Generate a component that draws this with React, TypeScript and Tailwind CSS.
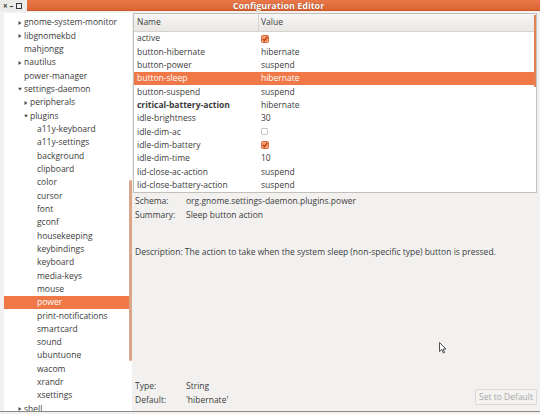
import React from 'react'

type Node = { label: string; depth: number; arrow?: 'right' | 'down'; selected?: boolean }

const tree: Node[] = [
  { label: 'gnome-system-monitor', depth: 0, arrow: 'right' },
  { label: 'libgnomekbd', depth: 0, arrow: 'right' },
  { label: 'mahjongg', depth: 0 },
  { label: 'nautilus', depth: 0, arrow: 'right' },
  { label: 'power-manager', depth: 0 },
  { label: 'settings-daemon', depth: 0, arrow: 'down' },
  { label: 'peripherals', depth: 1, arrow: 'right' },
  { label: 'plugins', depth: 1, arrow: 'down' },
  { label: 'a11y-keyboard', depth: 2 },
  { label: 'a11y-settings', depth: 2 },
  { label: 'background', depth: 2 },
  { label: 'clipboard', depth: 2 },
  { label: 'color', depth: 2 },
  { label: 'cursor', depth: 2 },
  { label: 'font', depth: 2 },
  { label: 'gconf', depth: 2 },
  { label: 'housekeeping', depth: 2 },
  { label: 'keybindings', depth: 2 },
  { label: 'keyboard', depth: 2 },
  { label: 'media-keys', depth: 2 },
  { label: 'mouse', depth: 2 },
  { label: 'power', depth: 2, selected: true },
  { label: 'print-notifications', depth: 2 },
  { label: 'smartcard', depth: 2 },
  { label: 'sound', depth: 2 },
  { label: 'ubuntuone', depth: 2 },
  { label: 'wacom', depth: 2 },
  { label: 'xrandr', depth: 2 },
  { label: 'xsettings', depth: 2 },
  { label: 'shell', depth: 0, arrow: 'right' },
]

type Row = { name: string; value?: string; check?: boolean; bold?: boolean; selected?: boolean }

const rows: Row[] = [
  { name: 'active', check: true },
  { name: 'button-hibernate', value: 'hibernate' },
  { name: 'button-power', value: 'suspend' },
  { name: 'button-sleep', value: 'hibernate', selected: true },
  { name: 'button-suspend', value: 'suspend' },
  { name: 'critical-battery-action', value: 'hibernate', bold: true },
  { name: 'idle-brightness', value: '30' },
  { name: 'idle-dim-ac', check: false },
  { name: 'idle-dim-battery', check: true },
  { name: 'idle-dim-time', value: '10' },
  { name: 'lid-close-ac-action', value: 'suspend' },
  { name: 'lid-close-battery-action', value: 'suspend' },
]

const indent = ['pl-[13px]', 'pl-[19px]', 'pl-[26px]']

function Arrow({ dir }: { dir: 'right' | 'down' }) {
  return (
    <svg width="6" height="6" viewBox="0 0 6 6" className="shrink-0">
      {dir === 'right' ? <path d="M1.5 1 L4.5 3 L1.5 5 Z" fill="#4c4c4c" /> : <path d="M1 1.8 L5 1.8 L3 4.6 Z" fill="#4c4c4c" />}
    </svg>
  )
}

function Check({ on }: { on: boolean }) {
  if (!on) return <span className="inline-block w-[7px] h-[7px] rounded-[1px] border border-[#c9c6c2] bg-white" />
  return (
    <svg width="8" height="8" viewBox="0 0 8 8">
      <rect x="0.5" y="0.5" width="7" height="7" rx="1" fill="#f4a078" stroke="#d86a3a" />
      <path d="M1.8 4 L3.4 5.6 L6.4 1.8" stroke="#b8410f" strokeWidth="1.4" fill="none" />
    </svg>
  )
}

export default function App() {
  return (
    <div className="relative w-[540px] h-[414px] overflow-hidden bg-[#f2f1f0] flex flex-col text-[8.5px] text-[#3c3c3c] font-['Open_Sans',sans-serif]">
      <div className="h-[11px] flex shrink-0">
        <div className="w-[27px] bg-[#ecebe9] flex items-center gap-[2px] pl-[3px] text-[#3a3a3a] text-[8px] leading-none font-bold">
          <span>×</span>
          <span>–</span>
          <span className="inline-block w-[6px] h-[6px] border border-[#3a3a3a]" />
        </div>
        <div className="flex-1 bg-gradient-to-b from-[#e9784a] to-[#dc6431] flex items-center justify-center border-b border-[#c65a2c] pr-[10px]">
          <span className="text-white font-bold text-[9px] leading-none [text-shadow:0_0_1px_#7a3012]">Configuration Editor</span>
        </div>
      </div>

      <div className="flex-1 flex pt-[2px] min-h-0">
        <div className="ml-[4px] w-[128px] flex bg-white shrink-0">
          <div className="flex-1 pt-[3px] overflow-hidden">
            {tree.map(n => (
              <div key={n.label} className={`h-[13.33px] flex items-center ${indent[n.depth]} ${n.selected ? 'bg-[#f07746] text-white' : ''}`}>
                <span className="w-[7px] flex items-center shrink-0">{n.arrow && <Arrow dir={n.arrow} />}</span>
                <span className="whitespace-nowrap">{n.label}</span>
              </div>
            ))}
          </div>
          <div className="w-[3px] pt-[167px] bg-white">
            <div className="h-[181px] bg-[#d9a688] rounded-full" />
          </div>
        </div>

        <div className="flex-1 flex flex-col ml-[1px] mr-[3px] min-w-0">
          <div className="h-[180px] flex bg-white border border-[#c3c0bb] shrink-0">
            <div className="flex-1 min-w-0">
              <div className="h-[18px] flex border-b border-[#d6d3cf] bg-gradient-to-b from-[#f8f7f6] to-[#e9e7e4]">
                <div className="w-[125px] pl-[3px] flex items-center border-r border-[#d6d3cf]">Name</div>
                <div className="flex-1 pl-[2px] flex items-center">Value</div>
              </div>
              {rows.map(r => (
                <div key={r.name} className={`h-[13.33px] flex items-center ${r.selected ? 'bg-[#f07746] text-white' : ''}`}>
                  <div className={`w-[125px] pl-[3px] whitespace-nowrap ${r.bold ? 'font-bold' : ''}`}>{r.name}</div>
                  <div className="flex-1 pl-[2px] flex items-center">
                    {r.check !== undefined ? <Check on={r.check} /> : r.value}
                  </div>
                </div>
              ))}
            </div>
            <div className="w-[2px] pt-[1px]">
              <div className="h-[72px] bg-[#e7804f]" />
            </div>
          </div>

          <div className="flex-1 flex flex-col pl-[2px] pt-[1px] pb-[5px]">
            <div className="grid grid-cols-[51px_1fr] leading-[13.5px]">
              <span>Schema:</span>
              <span>org.gnome.settings-daemon.plugins.power</span>
              <span>Summary:</span>
              <span>Sleep button action</span>
            </div>
            <div className="mt-[25px] whitespace-nowrap">Description: The action to take when the system sleep (non-specific type) button is pressed.</div>
            <div className="flex-1" />
            <div className="flex items-end justify-between">
              <div className="grid grid-cols-[51px_1fr] leading-[13.5px]">
                <span>Type:</span>
                <span>String</span>
                <span>Default:</span>
                <span>'hibernate'</span>
              </div>
              <button className="h-[16px] px-[3px] mb-[1px] border border-[#dcdad6] rounded-[2px] bg-[#f4f3f2] text-[#a9a7a4] leading-none">Set to Default</button>
            </div>
          </div>
        </div>
      </div>

      <div className="h-[3px] border-t border-[#8d8a86] shrink-0" />

      <svg className="absolute left-[439px] top-[342px]" width="8" height="12" viewBox="0 0 8 12">
        <path d="M0.5 0.5 L0.5 9.5 L2.7 7.5 L4.3 11 L5.6 10.4 L4.1 7 L7 7 Z" fill="#f6f6f6" stroke="#2a2a2a" strokeWidth="0.8" />
      </svg>
    </div>
  )
}
